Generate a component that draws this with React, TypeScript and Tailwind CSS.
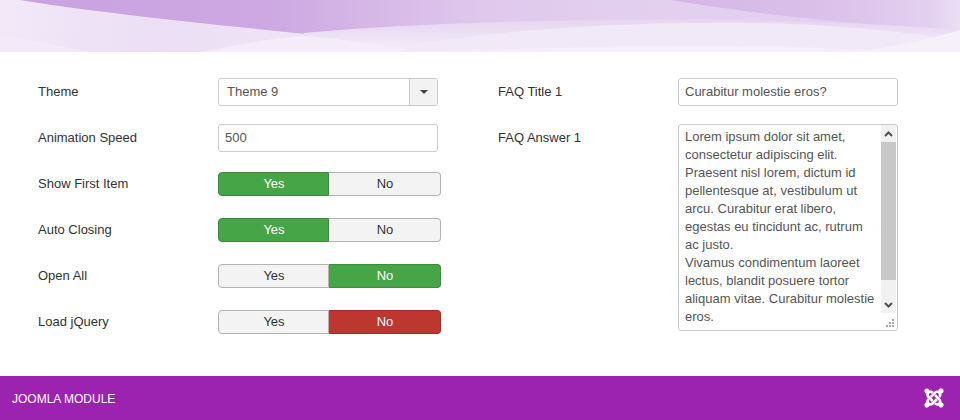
import { FaJoomla } from "react-icons/fa";

const LINES = [
  "Lorem ipsum dolor sit amet,",
  "consectetur adipiscing elit.",
  "Praesent nisl lorem, dictum id",
  "pellentesque at, vestibulum ut",
  "arcu. Curabitur erat libero,",
  "egestas eu tincidunt ac, rutrum",
  "ac justo.",
  "Vivamus condimentum laoreet",
  "lectus, blandit posuere tortor",
  "aliquam vitae. Curabitur molestie",
  "eros.",
];

function Header() {
  return (
    <div className="h-[52px] w-full shrink-0 overflow-hidden">
      <svg width="960" height="52" viewBox="0 0 960 52" className="block">
        <defs>
          <linearGradient id="base" x1="0" y1="0" x2="960" y2="0" gradientUnits="userSpaceOnUse">
            <stop offset="0" stopColor="#c9a2df" />
            <stop offset="0.28" stopColor="#cda8e2" />
            <stop offset="0.5" stopColor="#dfc8ec" />
            <stop offset="0.68" stopColor="#e3d0ef" />
            <stop offset="1" stopColor="#e3d0ef" />
          </linearGradient>
          <linearGradient id="right" x1="670" y1="0" x2="960" y2="0" gradientUnits="userSpaceOnUse">
            <stop offset="0" stopColor="#d3b5e5" />
            <stop offset="0.6" stopColor="#dcc3ea" />
            <stop offset="0.9" stopColor="#e3d0ef" />
            <stop offset="1" stopColor="#ebdff3" />
          </linearGradient>
          <linearGradient id="left" x1="0" y1="0" x2="320" y2="40" gradientUnits="userSpaceOnUse">
            <stop offset="0" stopColor="#f1e8f8" />
            <stop offset="0.5" stopColor="#ecdff5" />
            <stop offset="1" stopColor="#efe4f7" />
          </linearGradient>
          <linearGradient id="fade" x1="0" y1="20" x2="0" y2="52" gradientUnits="userSpaceOnUse">
            <stop offset="0" stopColor="#e6d6f0" />
            <stop offset="1" stopColor="#f5edfa" />
          </linearGradient>
        </defs>
        <rect width="960" height="52" fill="url(#base)" />
        <path d="M670 0 L960 0 L960 30 C880 26 780 18 670 0Z" fill="url(#right)" />
        <path d="M0 0 L20 0 C120 16 220 25 306 34 L330 52 L0 52Z" fill="url(#left)" />
        <path d="M304 33 C460 18 760 14 960 30 L960 52 L300 52Z" fill="url(#fade)" />
        <path d="M0 35 C40 42 70 48 90 52 L0 52Z" fill="#f3eaf9" />
        <path d="M200 52 C240 44 280 37 306 36 C350 40 390 46 420 52Z" fill="#f4ecf9" />
        <path d="M420 43 C520 28 640 21 760 23 C840 25 900 32 930 36 L960 52 L400 52Z" fill="#f1e9f7" />
        <path d="M400 52 C600 46 780 42 880 52Z" fill="#f7eefb" />
        <path d="M855 52 C900 46 940 36 960 30 L960 52Z" fill="#f5f0f9" />
      </svg>
    </div>
  );
}

function Toggle({ active, color }: { active: "yes" | "no"; color: "green" | "red" }) {
  const on =
    color === "green"
      ? "bg-[#46a546] border-[#3d8b3d] text-white"
      : "bg-[#bd362f] border-[#a32e28] text-white";
  const off = "bg-[#f3f3f3] border-[#b3b3b3] text-[#333333]";
  return (
    <div className="flex h-6 w-[223px] text-[13px] leading-[22px]">
      <div className={`flex w-[111px] items-center justify-center rounded-l border pl-px ${active === "yes" ? on : off}`}>Yes</div>
      <div className={`flex w-[112px] items-center justify-center rounded-r border border-l-0 pl-px ${active === "no" ? on : off}`}>No</div>
    </div>
  );
}

function Row({ label, children }: { label: string; children: React.ReactNode }) {
  return (
    <div className="flex h-7 items-center">
      <div className="w-[180px] shrink-0 text-[13px] text-[#333333]">{label}</div>
      {children}
    </div>
  );
}

function TextInput({ value }: { value: string }) {
  return (
    <div className="flex h-7 w-[220px] items-center rounded-[3px] border border-[#cccccc] bg-white px-[6px] text-[13px] text-[#555555]">
      {value}
    </div>
  );
}

function Scrollbar() {
  return (
    <div className="flex w-[15px] shrink-0 flex-col">
      <div className="flex h-[17px] items-center justify-center bg-[#f1f1f1]">
        <svg width="9" height="6" viewBox="0 0 9 6"><path d="M1 5 L4.5 1.5 L8 5" fill="none" stroke="#505050" strokeWidth="2" /></svg>
      </div>
      <div className="h-[138px] bg-[#c8c8c8]" />
      <div className="h-[17px] bg-[#f1f1f1]" />
      <div className="flex h-4 items-center justify-center bg-[#f1f1f1]">
        <svg width="9" height="6" viewBox="0 0 9 6"><path d="M1 1 L4.5 4.5 L8 1" fill="none" stroke="#505050" strokeWidth="2" /></svg>
      </div>
      <div className="flex flex-1 items-end justify-end bg-white pb-[2px] pr-[1px]">
        <svg width="9" height="9" viewBox="0 0 9 9" fill="#a8a8a8">
          <rect x="6" y="0" width="2" height="2" />
          <rect x="3" y="3" width="2" height="2" />
          <rect x="6" y="3" width="2" height="2" />
          <rect x="0" y="6" width="2" height="2" />
          <rect x="3" y="6" width="2" height="2" />
          <rect x="6" y="6" width="2" height="2" />
        </svg>
      </div>
    </div>
  );
}

export default function App() {
  return (
    <div className="flex h-[420px] w-[960px] flex-col overflow-hidden bg-white font-['Liberation_Sans',Arial,sans-serif]">
      <Header />
      <div className="flex flex-1 px-[38px] pt-[26px]">
        <div className="flex w-[460px] shrink-0 flex-col gap-[18px]">
          <Row label="Theme">
            <div className="flex h-7 w-[220px] rounded-[3px] border border-[#cccccc] bg-white text-[13px] text-[#555555]">
              <div className="flex flex-1 items-center pl-2">Theme 9</div>
              <div className="flex w-7 items-center justify-center rounded-r-[3px] border-l border-[#cccccc] bg-[#f2f2f2]">
                <div className="h-0 w-0 border-x-[4px] border-t-[4px] border-x-transparent border-t-[#444444]" />
              </div>
            </div>
          </Row>
          <Row label="Animation Speed"><TextInput value="500" /></Row>
          <Row label="Show First Item"><Toggle active="yes" color="green" /></Row>
          <Row label="Auto Closing"><Toggle active="yes" color="green" /></Row>
          <Row label="Open All"><Toggle active="no" color="green" /></Row>
          <Row label="Load jQuery"><Toggle active="no" color="red" /></Row>
        </div>
        <div className="flex flex-col gap-[18px]">
          <Row label="FAQ Title 1"><TextInput value="Curabitur molestie eros?" /></Row>
          <div className="flex items-start">
            <div className="flex h-7 w-[180px] shrink-0 items-center text-[13px] text-[#333333]">FAQ Answer 1</div>
            <div className="flex h-[207px] w-[220px] overflow-hidden rounded-[3px] border border-[#cccccc] bg-white">
              <div className="flex-1 whitespace-nowrap pl-[6px] pt-[3px] text-[13px] leading-[18px] text-[#555555]">
                {LINES.map((l) => (
                  <div key={l}>{l}</div>
                ))}
              </div>
              <Scrollbar />
              <div className="w-px shrink-0" />
            </div>
          </div>
        </div>
      </div>
      <div className="flex h-11 shrink-0 items-center justify-between bg-[#9c22b0] pl-3 pr-[15px] text-xs text-white">
        <span className="pt-px">JOOMLA MODULE</span>
        <FaJoomla size={22} />
      </div>
    </div>
  );
}
